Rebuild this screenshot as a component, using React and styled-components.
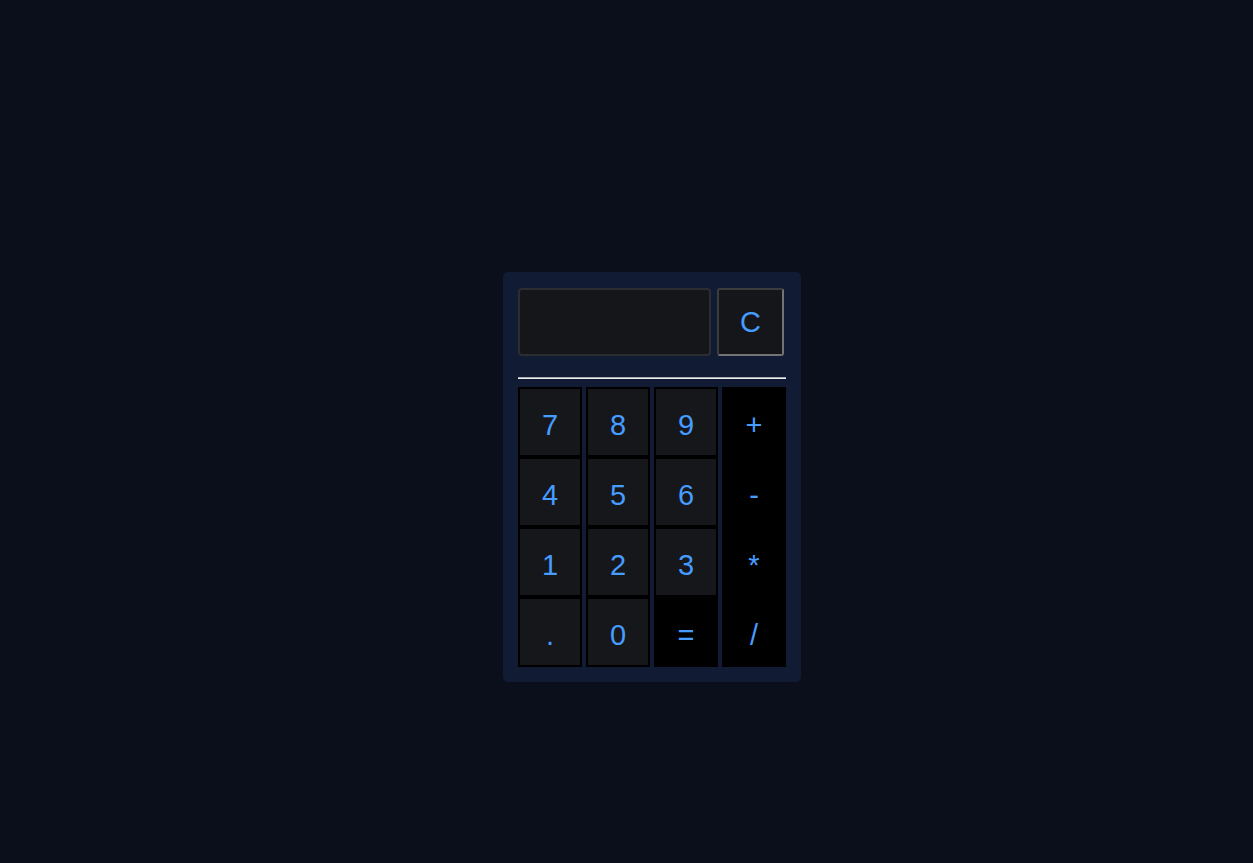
import styled, { createGlobalStyle } from 'styled-components'

const GlobalStyle = createGlobalStyle`
  html, body {
    margin: 0;
    padding: 0;
    background: #0a0f1b;
    font-family: "Liberation Sans", Arial, sans-serif;
  }
`

const Page = styled.div`
  min-height: 863px;
  display: flex;
  justify-content: center;
  align-items: flex-start;
  padding: 272px 0 0 51px;
  box-sizing: border-box;
`

const Calculator = styled.div`
  width: 298px;
  box-sizing: border-box;
  padding: 16px 15px 15px 15px;
  background: #111c34;
  border-radius: 5px;
`

const Top = styled.div`
  display: flex;
  gap: 6px;
  height: 68px;
`

const Display = styled.div`
  width: 193px;
  box-sizing: border-box;
  background: #151619;
  border: 2px solid #2c2d30;
  border-radius: 4px;
`

const Clear = styled.button`
  width: 67px;
  box-sizing: border-box;
  background: #151619;
  border: 2px solid;
  border-color: #3c3c3c #737373 #737373 #3c3c3c;
  border-radius: 3px;
  color: #469cff;
  font-family: inherit;
  font-size: 29px;
  padding: 0;
`

const Divider = styled.hr`
  margin: 21px 0 8px 0;
  border: 0;
  border-top: 1px solid #a9acb3;
  border-bottom: 1px solid #eceef2;
  height: 0;
`

const Keys = styled.div`
  display: grid;
  grid-template-columns: repeat(4, 64px);
  gap: 4px;
`

const Column = styled.div`
  display: flex;
  flex-direction: column;
  background: #000;
`

const Key = styled.button`
  height: 70px;
  box-sizing: border-box;
  border: 2px solid #000;
  background: ${p => (p.$dark ? '#000' : '#16171a')};
  color: #469cff;
  font-family: inherit;
  font-size: 29px;
  padding: 6px 0 0 0;
  cursor: pointer;
`

const columns = [
  ['7', '4', '1', '.'],
  ['8', '5', '2', '0'],
  ['9', '6', '3', '='],
  ['+', '-', '*', '/'],
]

const isDark = k => '=+-*/'.includes(k)

export default function App() {
  return (
    <Page>
      <GlobalStyle />
      <Calculator>
        <Top>
          <Display />
          <Clear>C</Clear>
        </Top>
        <Divider />
        <Keys>
          {columns.map((col, i) => (
            <Column key={i}>
              {col.map(k => (
                <Key key={k} $dark={isDark(k)}>{k}</Key>
              ))}
            </Column>
          ))}
        </Keys>
      </Calculator>
    </Page>
  )
}
